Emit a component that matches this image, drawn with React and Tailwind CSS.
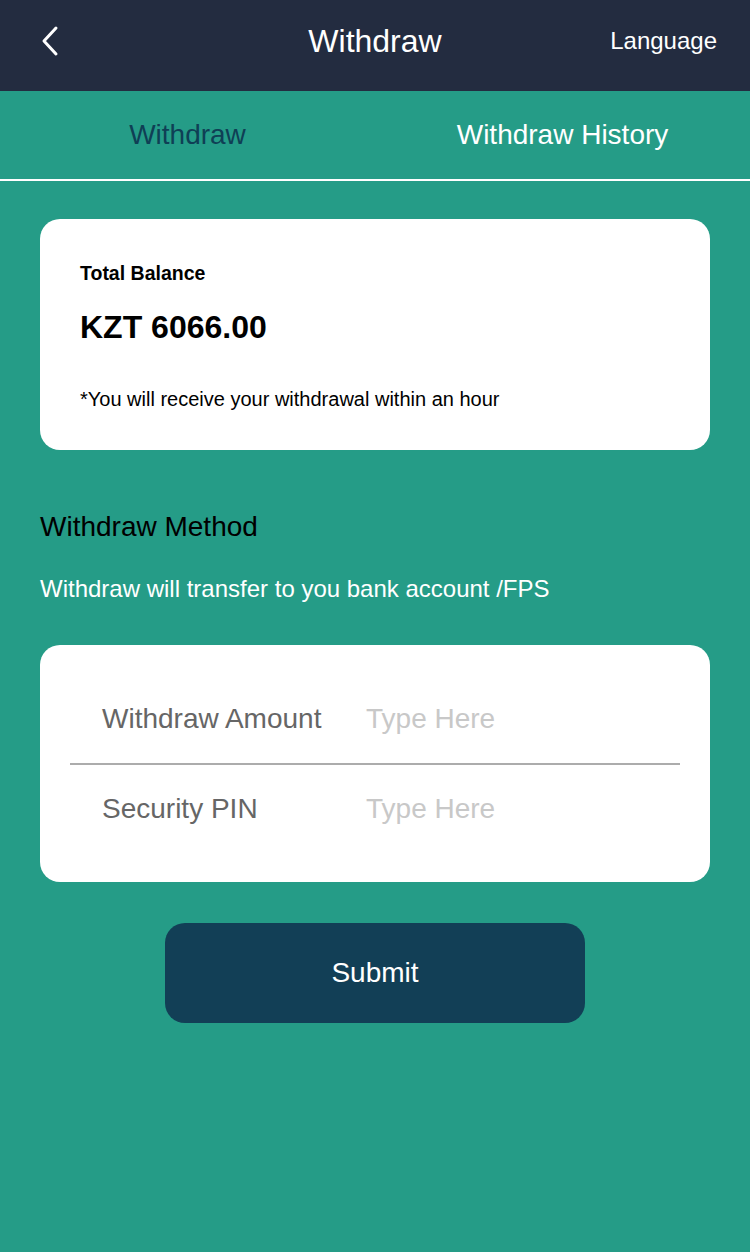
import React from "react";

const App = () => {
	return (
		<div className="min-h-[1252px] bg-[#259c87] font-[family-name:'Liberation_Sans',Arial,sans-serif]">
			<div className="h-[91px] bg-[#232c40] flex items-center justify-between px-[40px] pb-[10px] text-white relative">
				<svg width="20" height="32" viewBox="0 0 20 32" fill="none" stroke="white" strokeWidth="3" strokeLinecap="round" strokeLinejoin="round">
					<path d="M16 3 L4 16 L16 29" />
				</svg>
				<h1 className="absolute left-0 right-0 text-center text-[32px] leading-none pointer-events-none">Withdraw</h1>
				<span className="text-[24px] leading-none mr-[-7px]">Language</span>
			</div>
			<div className="h-[90px] flex border-b-2 border-white">
				<div className="flex-1 flex items-center justify-center text-[28px] text-[#0f3f55]">Withdraw</div>
				<div className="flex-1 flex items-center justify-center text-[28px] text-white">Withdraw History</div>
			</div>
			<div className="px-[40px] pt-[38px]">
				<div className="bg-white rounded-[20px] h-[231px] px-[40px] pt-[43px]">
					<p className="text-[19.5px] leading-[22px] font-bold text-black">Total Balance</p>
					<p className="text-[32px] leading-[36px] font-bold text-black mt-[25px]">KZT 6066.00</p>
					<p className="text-[20px] leading-[22px] text-black mt-[43px]">*You will receive your withdrawal within an hour</p>
				</div>
				<h2 className="text-[28px] leading-[30px] text-black mt-[62px]">Withdraw Method</h2>
				<p className="text-[24px] leading-[26px] text-white mt-[34px]">Withdraw will transfer to you bank account /FPS</p>
				<div className="bg-white rounded-[20px] h-[237px] mt-[43px] px-[30px] pt-[30px]">
					<div className="flex items-center h-[90px] border-b-2 border-[#acacac] pl-[32px]">
						<span className="w-[264px] text-[28px] leading-[32px] text-[#666666]">Withdraw Amount</span>
						<span className="text-[28px] leading-[32px] text-[#c8c8c8]">Type Here</span>
					</div>
					<div className="flex items-center h-[88px] pl-[32px]">
						<span className="w-[264px] text-[28px] leading-[32px] text-[#666666]">Security PIN</span>
						<span className="text-[28px] leading-[32px] text-[#c8c8c8]">Type Here</span>
					</div>
				</div>
				<div className="flex justify-center mt-[41px]">
					<button className="w-[420px] h-[100px] rounded-[20px] bg-[#123f56] text-white text-[28px]">Submit</button>
				</div>
			</div>
		</div>
	);
};

export default App;
